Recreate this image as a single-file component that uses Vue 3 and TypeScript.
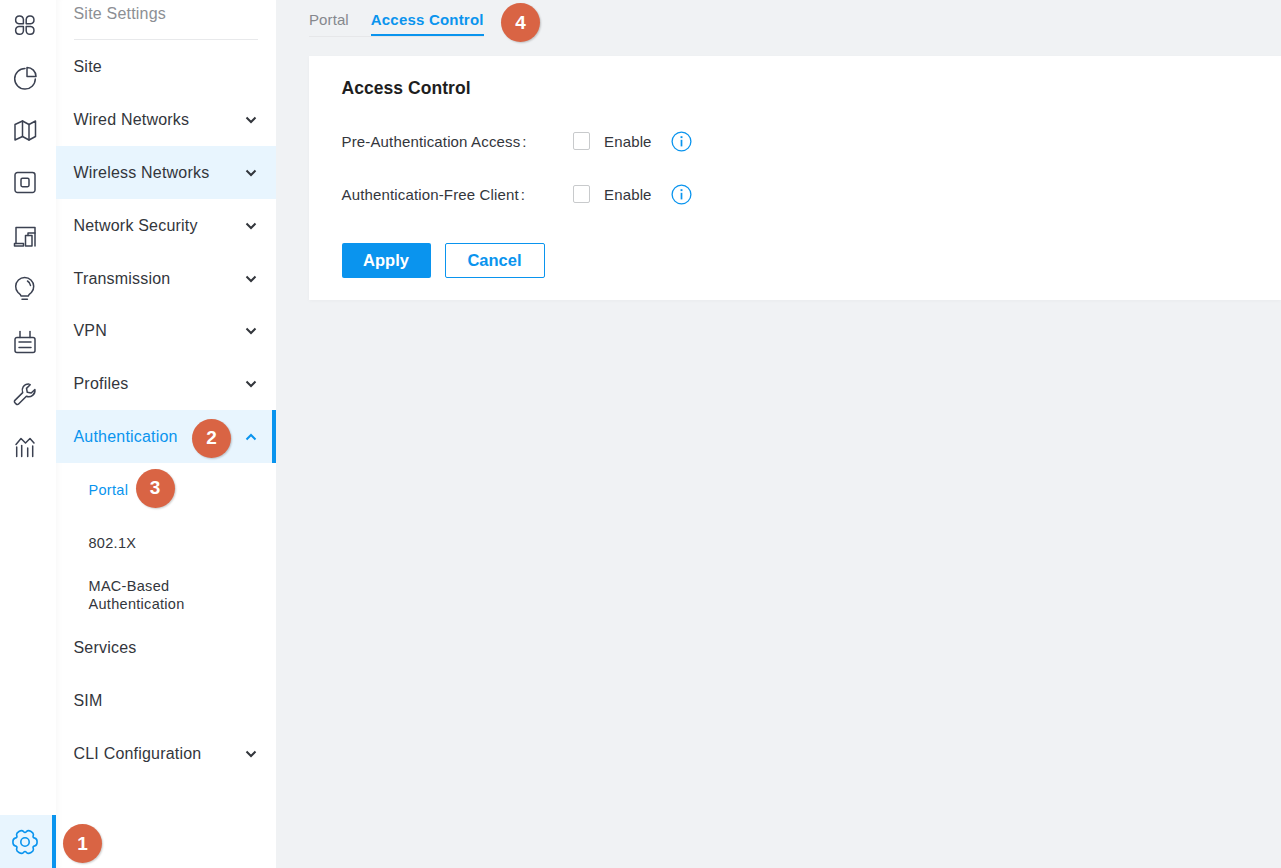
<template>
  <div class="page">
    <nav class="rail">
      <div v-for="(icon, i) in railIcons" :key="i" class="rail-item">
        <svg width="26" height="26" viewBox="0 0 26 26" fill="none" stroke="currentColor" stroke-width="1.5" stroke-linecap="round" stroke-linejoin="round">
          <path v-for="d in icon" :key="d" :d="d" />
        </svg>
      </div>
      <div class="rail-spacer"></div>
      <div class="rail-item active">
        <svg width="26" height="26" viewBox="0 0 26 26" fill="none" stroke="currentColor" stroke-width="1.6" stroke-linejoin="round">
          <path :d="gearPath" />
          <circle cx="13" cy="13" r="4.2" />
        </svg>
      </div>
      <span class="badge badge-1">1</span>
    </nav>

    <aside class="sidebar">
      <div class="side-title">Site Settings</div>
      <div v-for="item in menu" :key="item.label" class="menu-group">
        <div class="menu-row" :class="{ hover: item.label === 'Wireless Networks', open: item.open }">
          <span>{{ item.label }}</span>
          <svg v-if="item.arrow" class="chev" width="12" height="8" viewBox="0 0 12 8" fill="none" stroke="currentColor" stroke-width="2">
            <path :d="item.open ? 'M1.5 6.500 6 2l4.500 4.500' : 'M1.500 1.500 6 6l4.500-4.500'" />
          </svg>
          <span v-if="item.open" class="badge badge-2">2</span>
        </div>
        <template v-if="item.open">
          <div v-for="sub in subItems" :key="sub" class="sub-row" :class="{ current: sub === 'Portal' }">
            <span>{{ sub }}</span>
            <span v-if="sub === 'Portal'" class="badge badge-3">3</span>
          </div>
        </template>
      </div>
    </aside>

    <main class="content">
      <div class="tabs">
        <span class="tab">Portal</span>
        <span class="tab selected">Access Control</span>
        <span class="badge badge-4">4</span>
      </div>
      <section class="card">
        <h2>Access Control</h2>
        <div v-for="row in formRows" :key="row" class="form-row">
          <label>{{ row }}<i>:</i></label>
          <span class="check"></span>
          <span class="enable">Enable</span>
          <svg class="info" width="21" height="21" viewBox="0 0 21 21" fill="none" stroke="#0a94ee" stroke-width="1.3">
            <circle cx="10.500" cy="10.500" r="9.400" />
            <path d="M10.500 8.800v6.600" stroke-width="1.700" />
            <path d="M10.500 5.200v1.900" stroke-width="1.900" />
          </svg>
        </div>
        <div class="actions">
          <button class="btn primary">Apply</button>
          <button class="btn outline">Cancel</button>
        </div>
      </section>
    </main>
  </div>
</template>

<script setup lang="ts">
interface MenuItem {
  label: string
  arrow?: boolean
  open?: boolean
}

const menu: MenuItem[] = [
  { label: 'Site' },
  { label: 'Wired Networks', arrow: true },
  { label: 'Wireless Networks', arrow: true },
  { label: 'Network Security', arrow: true },
  { label: 'Transmission', arrow: true },
  { label: 'VPN', arrow: true },
  { label: 'Profiles', arrow: true },
  { label: 'Authentication', arrow: true, open: true },
  { label: 'Services' },
  { label: 'SIM' },
  { label: 'CLI Configuration', arrow: true }
]

const subItems = ['Portal', '802.1X', 'MAC-Based Authentication']
const formRows = ['Pre-Authentication Access', 'Authentication-Free Client']

const railIcons: string[][] = [
  // dashboard
  [
    'M11.400 10.800H7a3.900 3.900 0 1 1 4.400-4.400z',
    'M14.200 10.800h4.400a3.900 3.900 0 1 0-4.400-4.400z',
    'M11.400 13.600H7a3.900 3.900 0 1 0 4.400 4.400z',
    'M14.200 13.600h4.400a3.900 3.900 0 1 1-4.400 4.400z'
  ],
  // pie
  [
    'M13 2.500A10.300 10.300 0 1 0 23.300 13',
    'M15 1.500a9 9 0 0 1 9 9h-9z'
  ],
  // map
  [
    'M3 6.500 10.500 3 17 6.500 23.500 3v15.500L17 22l-6.500-3.500L3 22z',
    'M10.500 3v15.500',
    'M17 6.500V22'
  ],
  // device
  [
    'M5.500 1.500h15a2.500 2.500 0 0 1 2.500 2.500v15a2.500 2.500 0 0 1-2.500 2.500h-15A2.500 2.500 0 0 1 3 19V4a2.500 2.500 0 0 1 2.500-2.500z',
    'M10.400 7.300h5.200a1.400 1.400 0 0 1 1.400 1.400v5.600a1.400 1.400 0 0 1-1.400 1.400h-5.200A1.400 1.400 0 0 1 9 14.300V8.700a1.400 1.400 0 0 1 1.400-1.400z'
  ],
  // devices
  [
    'M4 19.500v-16h19V22',
    'M2.500 19.500h9V22h-9z',
    'M13.500 11.500H20V22h-6.500z',
    'M16 11.500V9h7'
  ],
  // bulb
  [
    'M9 20c0-1.500-1.200-2.200-3-3.500a9 9 0 1 1 13.400 0c-1.800 1.300-3 2-3 3.500z',
    'M10 23.200h5.400',
    'M15.500 5a6 6 0 0 1 3 4.500'
  ],
  // adapter
  [
    'M5 8.500h16a2 2 0 0 1 2 2v11a2 2 0 0 1-2 2H5a2 2 0 0 1-2-2v-11a2 2 0 0 1 2-2z',
    'M8 8.500v-6',
    'M18 8.500v-6',
    'M7 13h12',
    'M7 18.500h12'
  ],
  // wrench
  [
    'M16.500 2.900a6.300 6.300 0 0 0-5.800 8.700L2.900 19.400a1.600 1.600 0 0 0 0 2.300l1.400 1.400a1.600 1.600 0 0 0 2.300 0l7.800-7.800a6.300 6.300 0 0 0 8.500-6.800l-3.700 3.500-3.900-.7-.8-3.900 3.700-3.700a6.300 6.300 0 0 0-1.700-.8z'
  ],
  // stats
  [
    'M4 10.500 9 4.500 13.500 9 18 4.500 22 9',
    'M4.700 13v9.500',
    'M9.700 11.500v11',
    'M15.700 14v8.500',
    'M20.700 12v10.500'
  ]
]

// six-lobed gear: two outer points per lobe and one notch, smoothed through midpoints
function buildGear(outer: number, notch: number): string {
  const pts: [number, number][] = []
  for (let i = 0; i < 6; i++) {
    const base = i * 60
    for (const [deg, r] of [[base - 16, outer], [base + 16, outer], [base + 30, notch]]) {
      const a = (deg * Math.PI) / 180
      pts.push([13 + r * Math.cos(a), 13 + r * Math.sin(a)])
    }
  }
  const mid = (a: [number, number], b: [number, number]) => `${((a[0] + b[0]) / 2).toFixed(2)} ${((a[1] + b[1]) / 2).toFixed(2)}`
  let d = `M${mid(pts[pts.length - 1], pts[0])}`
  pts.forEach((p, i) => {
    d += `Q${p[0].toFixed(2)} ${p[1].toFixed(2)} ${mid(p, pts[(i + 1) % pts.length])}`
  })
  return d + 'Z'
}

const gearPath = buildGear(12.6, 8.6)
</script>

<style scoped>
.page {
  display: flex;
  height: 868px;
  overflow: hidden;
  background: #f0f2f4;
  font-family: "Liberation Sans", Arial, sans-serif;
  color: #33363c;
}

.rail {
  position: relative;
  width: 56px;
  flex: none;
  display: flex;
  flex-direction: column;
  background: #fff;
}

.rail-item {
  height: 52.6px;
  flex: none;
  width: 52px;
  display: flex;
  align-items: center;
  justify-content: center;
  padding-right: 2px;
  box-sizing: border-box;
  color: #3b4151;
}

.rail-spacer {
  flex: 1;
}

.rail-item.active {
  width: 56px;
  height: 53px;
  padding-right: 2px;
  color: #0a94ee;
  background: #e8f5fe;
  border-right: 4px solid #0a94ee;
}

.sidebar {
  width: 220px;
  flex: none;
  background: #fff;
  box-shadow: inset 6px 0 6px -4px rgba(0, 0, 0, 0.03);
}

.side-title {
  margin: 0 18px 0 17.5px;
  height: 40px;
  box-sizing: border-box;
  padding-top: 5px;
  font-size: 16px;
  letter-spacing: 0.2px;
  line-height: 18px;
  color: #8c8f94;
  border-bottom: 1px solid #e8e9eb;
}

.menu-row {
  position: relative;
  height: 52.85px;
  display: flex;
  align-items: center;
  justify-content: space-between;
  padding: 1.5px 19px 0 17.5px;
  font-size: 16px;
  letter-spacing: 0.2px;
  box-sizing: border-box;
}

.menu-row.hover {
  background: #e8f5fe;
}

.menu-row.open {
  background: #e8f5fe;
  color: #0a94ee;
  border-right: 4px solid #0a94ee;
  padding-right: 15px;
}

.chev {
  flex: none;
}

.sub-row {
  position: relative;
  min-height: 52.85px;
  display: flex;
  align-items: center;
  padding: 1px 60px 0 32.5px;
  font-size: 14.5px;
  letter-spacing: 0.3px;
  line-height: 18px;
  box-sizing: border-box;
}

.sub-row.current {
  color: #0a94ee;
}

.content {
  flex: 1;
  min-width: 0;
  padding-left: 33px;
}

.tabs {
  position: relative;
  display: flex;
  gap: 22px;
  height: 37px;
  width: 175px;
  margin-bottom: 19px;
  border-bottom: 1px solid #e6e7e9;
  box-sizing: border-box;
}

.tab {
  height: 36px;
  box-sizing: border-box;
  padding-top: 11px;
  font-size: 15px;
  letter-spacing: 0.1px;
  line-height: 18px;
  color: #85888d;
}

.tab.selected {
  color: #0a94ee;
  font-weight: 700;
  letter-spacing: 0.2px;
  border-bottom: 2px solid #0a94ee;
}

.card {
  height: 244px;
  background: #fff;
  padding: 20px 0 0 32.5px;
  box-sizing: border-box;
  box-shadow: 0 1px 4px rgba(0, 0, 0, 0.03);
}

.card h2 {
  margin: 0 0 14.5px;
  font-size: 17.5px;
  letter-spacing: 0.05px;
  line-height: 24px;
  font-weight: 700;
  color: #1e1e1e;
}

.form-row {
  display: flex;
  align-items: center;
  height: 53px;
  font-size: 15px;
  letter-spacing: 0.15px;
}

.form-row label {
  width: 231.5px;
  flex: none;
}

.form-row label i {
  font-style: normal;
  margin-left: 2px;
}

.check {
  width: 15px;
  height: 16px;
  flex: none;
  border: 1px solid #c8cacc;
  border-radius: 2px;
  margin-right: 14px;
}

.enable {
  width: 67px;
  flex: none;
}

.info {
  flex: none;
}

.actions {
  display: flex;
  gap: 14px;
  margin-top: 22.5px;
}

.btn {
  height: 35px;
  border-radius: 2px;
  font-family: inherit;
  font-size: 16.5px;
  font-weight: 700;
  padding: 0;
  box-sizing: border-box;
}

.btn.primary {
  width: 89px;
  color: #fff;
  background: #0a94ee;
  border: none;
}

.btn.outline {
  width: 100px;
  color: #0a94ee;
  background: #fff;
  border: 1px solid #0a94ee;
}

.badge {
  position: absolute;
  width: 39px;
  height: 39px;
  border-radius: 50%;
  background: #d96444;
  color: #fff;
  font-size: 19px;
  letter-spacing: 0;
  font-weight: 700;
  display: flex;
  align-items: center;
  justify-content: center;
  box-shadow: 1px 1px 2px rgba(0, 0, 0, 0.2);
  z-index: 2;
}

.badge-1 {
  left: 63px;
  bottom: 5px;
}

.badge-2 {
  left: 136px;
  top: 9px;
}

.badge-3 {
  left: 79.5px;
  top: 6px;
}

.badge-4 {
  left: 192px;
  top: 3px;
}
</style>

<style>
html, body {
  margin: 0;
  overflow: hidden;
}
</style>
